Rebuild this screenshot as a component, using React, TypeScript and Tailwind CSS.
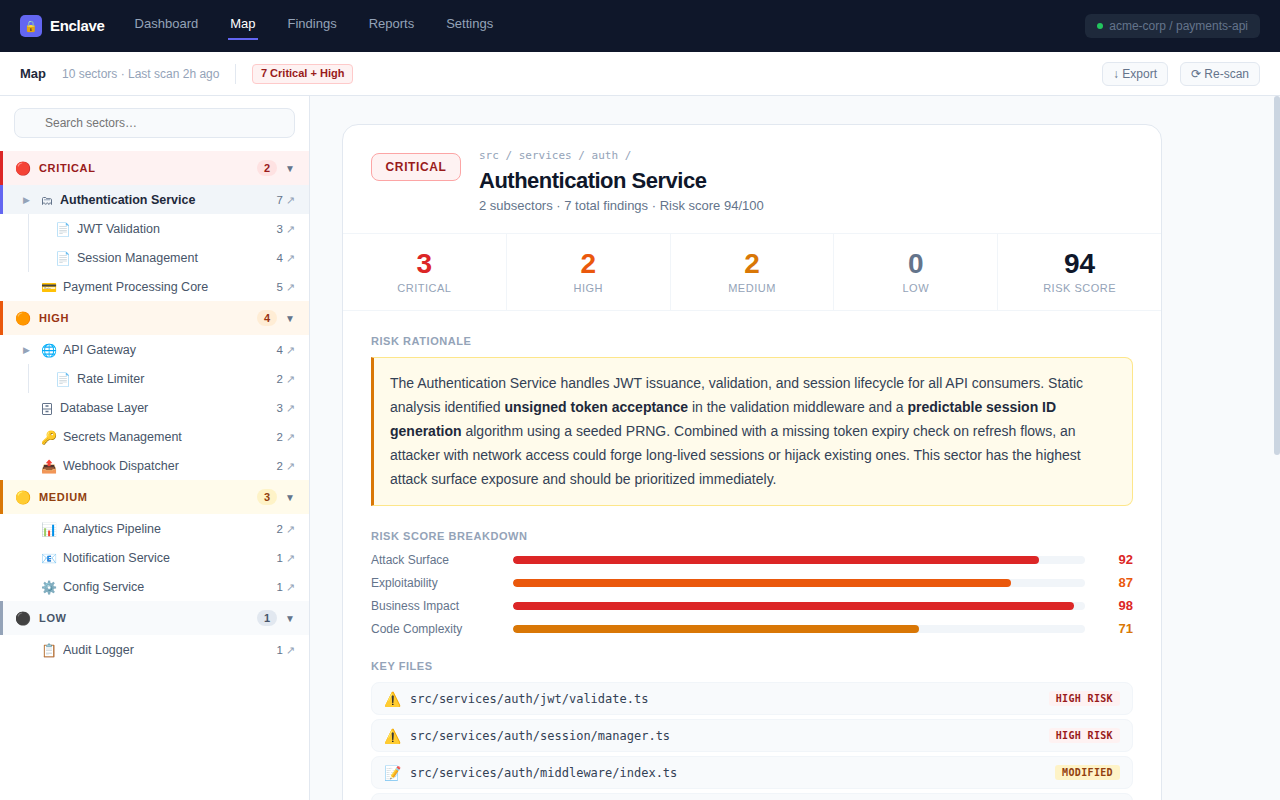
const sans = "[font-family:'Liberation_Sans',Arial,sans-serif]";

function FolderGlyph() {
  return (
    <svg width="12" height="10" viewBox="0 0 12 10" fill="none" stroke="#64748b" strokeWidth="1" className="block">
      <path d="M1.5 8.5V2.5c0-.6.4-1 1-1h2.2l1 1.2h3.8c.6 0 1 .4 1 1v4.8" />
      <path d="M1.5 8.5c0-1 .6-1.5 1.4-1.5s1.4.5 1.4 1.5M5 8.5c0-1 .6-1.5 1.3-1.5s1.3.5 1.3 1.5M8 8.5c0-1 .5-1.5 1.2-1.5s1.3.5 1.3 1.5" />
      <path d="M3 3.8h6" stroke="#94a3b8" />
    </svg>
  );
}

function CabinetGlyph() {
  return (
    <svg width="12" height="12" viewBox="0 0 12 12" fill="none" stroke="#64748b" strokeWidth="1" className="block">
      <rect x="1.5" y="0.5" width="9" height="11" rx="0.5" />
      <path d="M1.5 6h9" />
      <path d="M4.5 3h3M4.5 8.5h3" strokeWidth="1.6" />
    </svg>
  );
}

type Item = { icon: string; name: string; count: number; expand?: boolean; active?: boolean; sub?: boolean };
type Group = { emoji: string; label: string; count: number; head: string; border: string; text: string; pill: string; items: Item[] };

const groups: Group[] = [
  {
    emoji: "🔴", label: "Critical", count: 2, head: "bg-[#fef2f2]", border: "border-l-[#dc2626]", text: "text-[#991b1b]", pill: "bg-[#fee2e2]",
    items: [
      { icon: "folder", name: "Authentication Service", count: 7, expand: true, active: true },
      { icon: "📄", name: "JWT Validation", count: 3, sub: true },
      { icon: "📄", name: "Session Management", count: 4, sub: true },
      { icon: "💳", name: "Payment Processing Core", count: 5 },
    ],
  },
  {
    emoji: "🟠", label: "High", count: 4, head: "bg-[#fff7ed]", border: "border-l-[#ea580c]", text: "text-[#9a3412]", pill: "bg-[#ffedd5]",
    items: [
      { icon: "🌐", name: "API Gateway", count: 4, expand: true },
      { icon: "📄", name: "Rate Limiter", count: 2, sub: true },
      { icon: "cabinet", name: "Database Layer", count: 3 },
      { icon: "🔑", name: "Secrets Management", count: 2 },
      { icon: "📤", name: "Webhook Dispatcher", count: 2 },
    ],
  },
  {
    emoji: "🟡", label: "Medium", count: 3, head: "bg-[#fffbeb]", border: "border-l-[#d97706]", text: "text-[#92400e]", pill: "bg-[#fef3c7]",
    items: [
      { icon: "📊", name: "Analytics Pipeline", count: 2 },
      { icon: "📧", name: "Notification Service", count: 1 },
      { icon: "⚙️", name: "Config Service", count: 1 },
    ],
  },
  {
    emoji: "⚫", label: "Low", count: 1, head: "bg-[#f8fafc]", border: "border-l-[#94a3b8]", text: "text-[#475569]", pill: "bg-[#e2e8f0]",
    items: [{ icon: "📋", name: "Audit Logger", count: 1 }],
  },
];

const stats = [
  { v: "3", l: "Critical", c: "text-[#dc2626]" },
  { v: "2", l: "High", c: "text-[#ea580c]" },
  { v: "2", l: "Medium", c: "text-[#d97706]" },
  { v: "0", l: "Low", c: "text-[#64748b]" },
  { v: "94", l: "Risk Score", c: "text-[#0f172a]" },
];

const bars = [
  { l: "Attack Surface", w: "w-[92%]", v: 92, bg: "bg-[#dc2626]", c: "text-[#dc2626]" },
  { l: "Exploitability", w: "w-[87%]", v: 87, bg: "bg-[#ea580c]", c: "text-[#ea580c]" },
  { l: "Business Impact", w: "w-[98%]", v: 98, bg: "bg-[#dc2626]", c: "text-[#dc2626]" },
  { l: "Code Complexity", w: "w-[71%]", v: 71, bg: "bg-[#d97706]", c: "text-[#d97706]" },
];

const files = [
  { i: "⚠️", p: "src/services/auth/jwt/validate.ts", b: "High Risk", s: "bg-[#fef2f2] text-[#991b1b]" },
  { i: "⚠️", p: "src/services/auth/session/manager.ts", b: "High Risk", s: "bg-[#fef2f2] text-[#991b1b]" },
  { i: "📝", p: "src/services/auth/middleware/index.ts", b: "Modified", s: "bg-[#fef3c7] text-[#92400e]" },
  { i: "📝", p: "src/services/auth/refresh/token.ts", b: "Modified", s: "bg-[#fef3c7] text-[#92400e]" },
];

function Row({ item }: { item: Item }) {
  return (
    <div className={`relative flex h-[29px] items-center pr-[14px] pt-[2px] ${item.sub ? "pl-[55px]" : "pl-[23px]"} ${item.active ? "bg-[#f1f5f9] shadow-[inset_3px_0_0_#6366f1]" : ""}`}>
      {item.sub && <span className="absolute bottom-0 left-[28px] top-0 w-px bg-[#e2e8f0]" />}
      {!item.sub && <span className="w-[18px] shrink-0 text-[9px] text-[#94a3b8]">{item.expand ? "▶" : ""}</span>}
      {item.icon === "folder" ? (
        <span className="mr-[7px] w-3"><FolderGlyph /></span>
      ) : item.icon === "cabinet" ? (
        <span className="mr-[7px] w-3"><CabinetGlyph /></span>
      ) : (
        <span className="mr-[6px] text-[13px] leading-none">{item.icon}</span>
      )}
      <span className={`flex-1 truncate text-[12.5px] ${item.active ? "font-bold text-[#1e293b]" : "text-[#475569]"}`}>{item.name}</span>
      <span className="text-[11.5px] text-[#64748b]">{item.count}</span>
      <span className="ml-[3px] w-[9px] text-center text-[11px] text-[#94a3b8]">↗</span>
    </div>
  );
}

function SectionLabel({ children, className = "" }: { children: React.ReactNode; className?: string }) {
  return <div className={`text-[11px] font-bold uppercase leading-[13px] tracking-[0.55px] text-[#94a3b8] ${className}`}>{children}</div>;
}

export default function App() {
  return (
    <div className={`flex h-screen flex-col overflow-hidden bg-white ${sans}`}>
      <header className="flex h-[52px] shrink-0 items-center bg-[#0f172a] px-5">
        <div className="flex items-center gap-2">
          <span className="flex h-[22px] w-[22px] items-center justify-center rounded-[5px] bg-[#6366f1] text-[11px]">🔒</span>
          <span className="text-[15px] font-bold tracking-[-0.3px] text-white">Enclave</span>
        </div>
        <nav className="ml-[28px] flex items-center gap-7">
          {["Dashboard", "Map", "Findings", "Reports", "Settings"].map((n) => (
            <a key={n} className={`flex h-[28px] flex-col items-center border-b-2 px-[2px] pb-[6px] pt-[4px] text-[13px] leading-4 ${n === "Map" ? "border-[#6366f1] text-white" : "border-transparent text-[#94a3b8]"}`}>
              {n}
            </a>
          ))}
        </nav>
        <div className="ml-auto flex h-6 items-center gap-[6px] rounded-md bg-[#1e293b] px-3 text-[12px] text-[#64748b]">
          <span className="h-[6px] w-[6px] rounded-full bg-[#22c55e]" />
          acme-corp / payments-api
        </div>
      </header>

      <div className="flex h-[44px] shrink-0 items-center border-b border-[#e2e8f0] bg-white px-5">
        <span className="text-[13px] font-bold text-[#1e293b]">Map</span>
        <span className="ml-4 text-[12px] text-[#94a3b8]">10 sectors · Last scan 2h ago</span>
        <span className="ml-4 h-5 w-px bg-[#e2e8f0]" />
        <span className="ml-4 flex h-5 items-center rounded-[4px] border border-[#fecaca] bg-[#fef2f2] px-[7.5px] text-[11px] font-bold text-[#991b1b]">7 Critical + High</span>
        <button className="ml-auto h-6 rounded-[6px] border border-[#e2e8f0] bg-[#f8fafc] px-[10px] text-[12px] text-[#64748b]">↓ Export</button>
        <button className="ml-3 h-6 rounded-[6px] border border-[#e2e8f0] bg-[#f8fafc] px-[10px] text-[12px] text-[#64748b]">⟳ Re-scan</button>
      </div>

      <div className="flex min-h-0 flex-1">
        <aside className="w-[310px] shrink-0 overflow-hidden border-r border-[#e2e8f0] bg-white">
          <div className="px-[14px] pb-[13px] pt-3">
            <input
              placeholder="Search sectors…"
              className="h-[30px] w-full rounded-lg border border-[#e2e8f0] bg-[#f8fafc] pl-[30px] pr-3 text-[12px] text-[#1e293b] outline-none placeholder:text-[#757575]"
            />
          </div>
          {groups.map((g) => (
            <div key={g.label}>
              <div className={`flex h-[34px] items-center border-l-[3px] pl-3 pr-[14px] ${g.head} ${g.border}`}>
                <span className="w-4 text-[13px] leading-none">{g.emoji}</span>
                <span className={`ml-2 flex-1 text-[11px] font-bold uppercase tracking-[0.66px] ${g.text}`}>{g.label}</span>
                <span className={`flex h-4 w-5 items-center justify-center rounded-full text-[11px] font-bold ${g.pill} ${g.text}`}>{g.count}</span>
                <span className="ml-2 w-[10px] pt-px text-center text-[10px] leading-4 text-[#64748b]">▼</span>
              </div>
              {g.items.map((it) => (
                <Row key={it.name} item={it} />
              ))}
            </div>
          ))}
        </aside>

        <div className="relative min-w-0 flex-1">
          <main className="h-full overflow-y-auto bg-[#f8fafc] px-8 py-7 [scrollbar-width:none]">
            <div className="min-h-[1324px] w-[820px] rounded-2xl border border-[#e2e8f0] bg-white">
              <div className="flex h-[109px] gap-[18px] border-b border-[#f1f5f9] px-7 pt-6">
                <div className="mt-[4px] flex h-[28px] w-[90px] shrink-0 items-center justify-center self-start rounded-lg border border-[#fca5a5] bg-[#fef2f2] text-[12px] font-bold tracking-[0.6px] text-[#991b1b]">CRITICAL</div>
                <div>
                  <div className="font-['DejaVu_Sans_Mono',monospace] text-[11px] leading-[13px] text-[#94a3b8]">src / services / auth /</div>
                  <div className="mt-[5px] text-[22px] font-bold leading-[28px] tracking-[-0.5px] text-[#0f172a]">Authentication Service</div>
                  <div className="mt-[3px] text-[13px] leading-[16px] text-[#64748b]">2 subsectors · 7 total findings · Risk score 94/100</div>
                </div>
              </div>

              <div className="grid h-[77px] grid-cols-5 gap-px border-b border-[#f1f5f9] bg-[#f1f5f9]">
                {stats.map((s) => (
                  <div key={s.l} className="flex flex-col items-center bg-white pt-[14px]">
                    <span className={`text-[28px] font-bold leading-[32px] ${s.c}`}>{s.v}</span>
                    <span className="mt-[1px] text-[11px] uppercase leading-[14px] tracking-[0.5px] text-[#94a3b8]">{s.l}</span>
                  </div>
                ))}
              </div>

              <div className="px-7 pt-6">
                <SectionLabel>Risk Rationale</SectionLabel>
                <div className="mt-[9px] rounded-r-lg border border-l-[3px] border-[#fde68a] border-l-[#d97706] bg-[#fffbeb] pb-[14px] pl-4 pr-4 pt-[13px] text-[14px] leading-6 text-[#334155]">
                  The Authentication Service handles JWT issuance, validation, and session lifecycle for all API consumers. Static analysis identified <strong className="font-bold text-[#1e293b]">unsigned token acceptance</strong> in the validation middleware and a <strong className="font-bold text-[#1e293b]">predictable session ID generation</strong> algorithm using a seeded PRNG. Combined with a missing token expiry check on refresh flows, an attacker with network access could forge long-lived sessions or hijack existing ones. This sector has the highest attack surface exposure and should be prioritized immediately.
                </div>

                <SectionLabel className="mt-6">Risk Score Breakdown</SectionLabel>
                <div className="mt-[5px]">
                  {bars.map((b) => (
                    <div key={b.l} className="flex h-[23px] items-center">
                      <span className="w-[142px] shrink-0 text-[12px] text-[#64748b]">{b.l}</span>
                      <div className="h-2 flex-1 overflow-hidden rounded bg-[#f1f5f9]">
                        <div className={`h-full rounded ${b.w} ${b.bg}`} />
                      </div>
                      <span className={`w-[48px] shrink-0 text-right text-[13px] font-bold ${b.c}`}>{b.v}</span>
                    </div>
                  ))}
                </div>

                <SectionLabel className="mt-[20px]">Key Files</SectionLabel>
                <div className="mt-[9px] flex flex-col gap-1">
                  {files.map((f) => (
                    <div key={f.p} className="flex h-[33px] items-center rounded-lg border border-[#f1f5f9] bg-[#f8fafc] px-3">
                      <span className="w-[26px] text-[14px] leading-none">{f.i}</span>
                      <span className="flex-1 font-['DejaVu_Sans_Mono',monospace] text-[12px] text-[#334155]">{f.p}</span>
                      <span className={`flex h-[15px] items-center rounded-[3px] px-[7px] font-['DejaVu_Sans_Mono',monospace] text-[10px] font-bold uppercase tracking-[0.35px] ${f.s}`}>{f.b}</span>
                    </div>
                  ))}
                </div>
              </div>
            </div>
          </main>
          <div className="absolute right-0 top-0 h-[359px] w-[6px] rounded-[3px] bg-[#cbd5e1]" />
        </div>
      </div>
    </div>
  );
}
